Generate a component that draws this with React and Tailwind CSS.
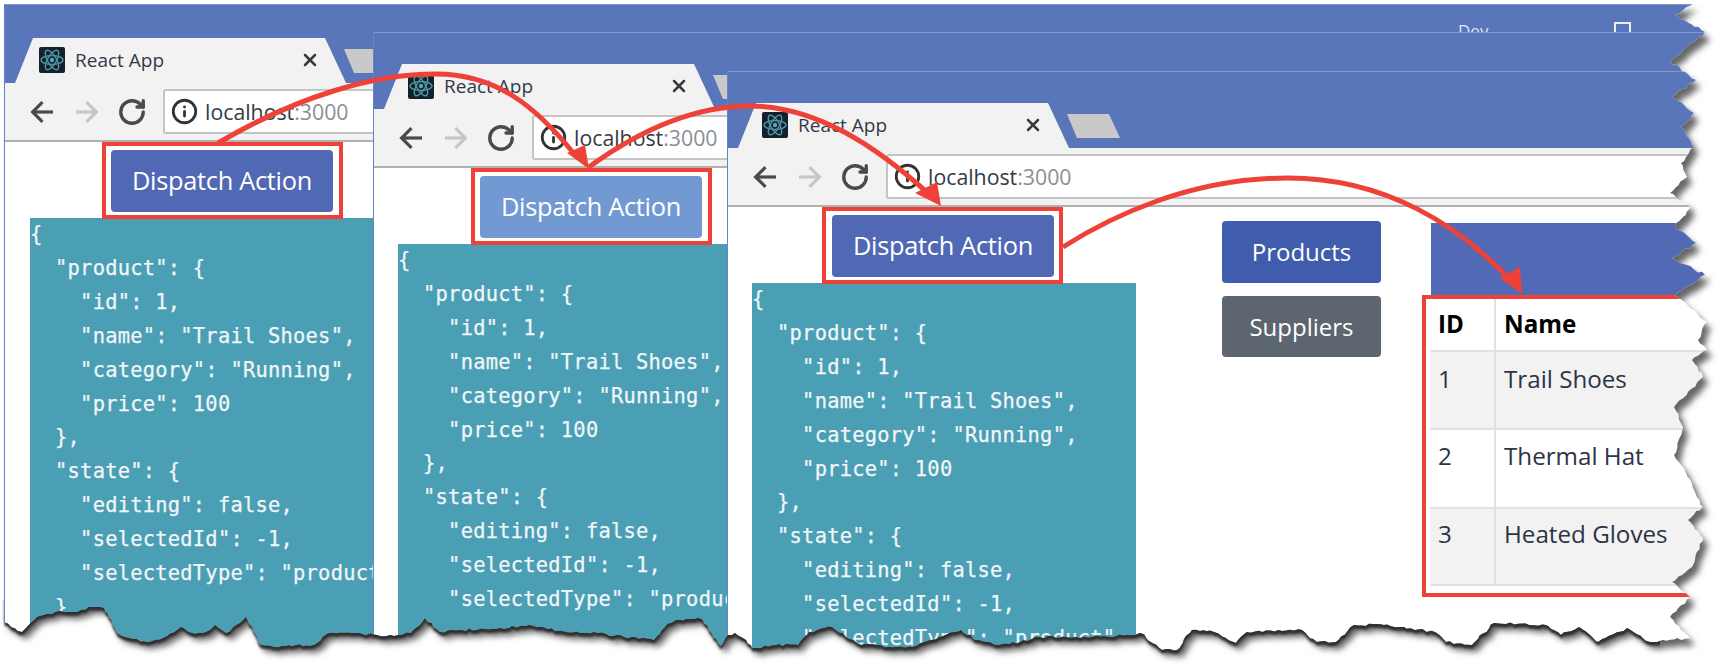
import React from "react";
import { RotateCw, X, Info } from "lucide-react";

const BOTTOM = [[4,622],[22,632],[37,617],[55,612],[74,612],[92,607],[104,608],[109,617],[117,633],[129,638],[148,642],[163,638],[181,627],[192,633],[203,633],[215,625],[226,633],[240,623],[246,617],[255,633],[261,645],[274,647],[296,645],[314,645],[329,633],[351,633],[377,635],[398,635],[411,633],[425,618],[440,632],[462,630],[492,629],[529,625],[548,629],[580,633],[598,633],[624,637],[654,640],[665,627],[676,620],[702,619],[709,630],[721,646],[728,635],[735,633],[746,640],[752,648],[776,645],[798,645],[809,632],[832,627],[846,637],[861,645],[913,647],[939,637],[961,630],[976,640],[998,645],[1020,642],[1035,637],[1076,637],[1135,635],[1140,633],[1162,650],[1177,650],[1192,630],[1214,632],[1236,643],[1247,632],[1302,630],[1317,642],[1336,642],[1354,625],[1384,625],[1435,632],[1446,642],[1472,645],[1494,623],[1546,625],[1561,635],[1579,627],[1590,635],[1598,642],[1627,628],[1650,642],[1690,638]];
const RIGHT = [[1670,617],[1690,597],[1672,582],[1692,567],[1703,538],[1688,520],[1703,507],[1686,473],[1674,455],[1683,427],[1674,407],[1703,377],[1692,360],[1707,350],[1698,340],[1707,322],[1675,295],[1705,275],[1672,258],[1696,243],[1675,227],[1690,208],[1687,203],[1670,193],[1687,177],[1681,163],[1694,147],[1681,127],[1694,113],[1672,97],[1696,80],[1685,72],[1670,62],[1705,32],[1675,15],[1693,4]];

function buildEdge() {
  let seed = 12345;
  const rnd = () => {
    seed = (seed * 1103515245 + 12345) % 2147483648;
    return seed / 2147483648 - 0.5;
  };
  const pts = [...BOTTOM, ...RIGHT];
  const out = [pts[0]];
  for (let i = 1; i < pts.length; i++) {
    const [ax, ay] = pts[i - 1];
    const [bx, by] = pts[i];
    const n = Math.max(1, Math.round(Math.hypot(bx - ax, by - ay) / 4));
    for (let k = 1; k <= n; k++) {
      const t = k / n;
      const j = k === n ? 0 : 1;
      out.push([
        +(ax + (bx - ax) * t + j * rnd() * 2).toFixed(1),
        +(ay + (by - ay) * t + j * rnd() * 2.6).toFixed(1),
      ]);
    }
  }
  return out;
}
const EDGE = buildEdge().map((p) => p.join(" ")).join(" L");
const PAGE_SHAPE = `M4 4 L${EDGE} Z`;
const OUTSIDE = `M0 0 H1719 V667 H0 Z ${PAGE_SHAPE}`;

function TornEdge() {
  return (
    <svg className="absolute left-0 top-0 pointer-events-none" width="1719" height="667" viewBox="0 0 1719 667">
      <defs>
        <clipPath id="outside">
          <path d={OUTSIDE} clipRule="evenodd" />
        </clipPath>
        <clipPath id="low">
          <rect x="0" y="600" width="1660" height="67" />
        </clipPath>
        <filter id="soft" x="-5%" y="-5%" width="110%" height="110%">
          <feGaussianBlur stdDeviation="3" />
        </filter>
        <filter id="tight" x="-5%" y="-5%" width="110%" height="110%">
          <feGaussianBlur stdDeviation="0.9" />
        </filter>
      </defs>
      <path d={OUTSIDE} fill="#ffffff" fillRule="evenodd" />
      <g clipPath="url(#outside)">
        <path d={PAGE_SHAPE} fill="#666666" transform="translate(5 7)" filter="url(#soft)" />
        <g clipPath="url(#low)">
          <path d={PAGE_SHAPE} fill="#2e2e2e" transform="translate(0.5 3.5)" filter="url(#tight)" />
        </g>
      </g>
    </svg>
  );
}

function Arrows() {
  const c = "#ee4238";
  return (
    <svg className="absolute left-0 top-0 pointer-events-none" width="1719" height="667" viewBox="0 0 1719 667">
      <g fill="none" stroke={c} strokeWidth="5">
        <path d="M218 143 C 300 95 375 74 436 74 C 495 74 535 105 575 155" />
        <path d="M589 167 C 640 130 695 106 750 106 C 815 106 875 145 930 195" />
        <path d="M1063 247 C 1110 217 1190 178 1288 178 C 1385 178 1460 225 1514 284" />
      </g>
      <g fill={c}>
        <polygon points="589,169 567,153 585,145" />
        <polygon points="941,206 915,193 937,182" />
        <polygon points="1522,294 1500,278 1520,267" />
      </g>
    </svg>
  );
}

function Favicon() {
  return (
    <svg width="26" height="26" viewBox="0 0 26 26" className="shrink-0">
      <rect width="26" height="26" rx="2" fill="#14202a" />
      <g fill="none" stroke="#4f96a6" strokeWidth="1.4">
        <ellipse cx="13" cy="13" rx="11" ry="4.4" />
        <ellipse cx="13" cy="13" rx="11" ry="4.4" transform="rotate(60 13 13)" />
        <ellipse cx="13" cy="13" rx="11" ry="4.4" transform="rotate(120 13 13)" />
      </g>
      <circle cx="13" cy="13" r="2.2" fill="#5aa6b6" />
    </svg>
  );
}

function NavArrow({ className, flip }) {
  return (
    <svg width="23" height="22" viewBox="0 0 23 22" className={`shrink-0 ${className}`}>
      <g fill="none" stroke="currentColor" strokeWidth="3.2" transform={flip ? "translate(23 0) scale(-1 1)" : undefined}>
        <path d="M23 11H3" />
        <path d="M12.5 1.2 L2.6 11 L12.5 20.8" />
      </g>
    </svg>
  );
}

function Tabs() {
  return (
    <div className="flex h-[45px] pl-[10px] shrink-0">
      <div className="flex items-center w-[331px] h-[45px] pl-[24px] pb-[1px] bg-[#f2f2f2] [clip-path:polygon(0_100%,18px_0,calc(100%-21px)_0,100%_100%)]">
        <Favicon />
        <span className="ml-[10px] text-[19px] leading-none text-[#333a45] font-['Open_Sans',sans-serif]">React App</span>
        <X className="ml-[136px] text-[#3a3a3a]" size={20} strokeWidth={3} />
      </div>
      <div className="w-[53px] h-[24px] mt-[11px] -ml-[2px] bg-[#c9c9c9] [clip-path:polygon(0_0,42px_0,100%_100%,10px_100%)]" />
    </div>
  );
}

function Toolbar() {
  return (
    <div className="flex items-center h-[59px] pl-[25px] bg-[#f2f2f2] border-b-2 border-[#b0b0b0] shrink-0">
      <NavArrow className="text-[#4a4a4a]" />
      <NavArrow className="ml-[23px] text-[#c6c6c6]" flip />
      <RotateCw className="ml-[18px] text-[#4a4a4a] shrink-0" size={30} strokeWidth={2.7} />
      <div className="flex items-center ml-[16px] h-[45px] flex-1 pl-[6px] bg-white border-2 border-r-0 border-[#c4c4c4] rounded-l-[3px] font-['Open_Sans',sans-serif] text-[21.3px]">
        <Info className="text-[#333] shrink-0" size={27} strokeWidth={2.5} />
        <span className="ml-[7px] text-[#333a45]">localhost</span>
        <span className="text-[#8a8f96]">:3000</span>
      </div>
    </div>
  );
}

const CODE = `{
  "product": {
    "id": 1,
    "name": "Trail Shoes",
    "category": "Running",
    "price": 100
  },
  "state": {
    "editing": false,
    "selectedId": -1,
    "selectedType": "product"
  }
}`;

function LeftColumn({ color, boxLeft, codeLeft, btnPad }) {
  return (
    <div className="flex flex-col items-start w-[410px] shrink-0 relative">
      <div
        className="w-[241px] h-[77px] border-4 border-[#ee4238] pt-[4px] bg-white relative z-10 shrink-0"
        style={{ marginLeft: boxLeft, paddingLeft: btnPad }}
      >
        <div
          className="flex items-center justify-center w-[222px] h-[62px] pb-[2px] rounded-[4px] text-white text-[25.4px] font-['Open_Sans',sans-serif] tracking-[-0.3px]"
          style={{ background: color }}
        >
          Dispatch Action
        </div>
      </div>
      <pre
        className="w-[384px] -mt-[1px] h-[440px] bg-[#4b9fb5] text-[#f2f6f8] text-[20.4px] leading-[33.9px] tracking-[0.25px] [-webkit-text-stroke:0.25px_#f2f6f8] font-['DejaVu_Sans_Mono',monospace] overflow-hidden shrink-0"
        style={{ marginLeft: codeLeft }}
      >
        {CODE}
      </pre>
    </div>
  );
}

function Window({ className, topPad, color, boxLeft, codeLeft, btnPad = 5, children }) {
  return (
    <div className={`absolute flex flex-col h-[680px] bg-white overflow-hidden border-l border-[#6585c8] ${className}`}>
      <div className="bg-[#5876b9] border-t border-[#7d99d0] shrink-0" style={{ height: topPad }} />
      <div className="bg-[#5876b9] shrink-0">
        <Tabs />
      </div>
      <Toolbar />
      <div className="flex flex-1 items-start">
        <LeftColumn color={color} boxLeft={boxLeft} codeLeft={codeLeft} btnPad={btnPad} />
        {children}
      </div>
    </div>
  );
}

function Rows() {
  const rows = [
    ["1", "Trail Shoes", "bg-[#f2f2f2]", "h-[78px]", "pt-[12px]"],
    ["2", "Thermal Hat", "bg-white", "h-[79px]", "pt-[11px]"],
    ["3", "Heated Gloves", "bg-[#f2f2f2]", "h-[77px]", "pt-[10px]"],
  ];
  return (
    <table className="w-[400px] table-fixed border-collapse text-[24.2px] leading-[30px] text-[#2d3444] font-['Open_Sans',sans-serif]">
      <colgroup>
        <col className="w-[65px]" />
        <col />
      </colgroup>
      <thead>
        <tr className="h-[52px] text-black">
          <th className="pl-[8px] pb-[2px] text-left font-bold border-r-2 border-b-2 border-[#dee2e6]">ID</th>
          <th className="pl-[8px] pb-[2px] text-left font-bold border-b-2 border-[#dee2e6]">Name</th>
        </tr>
      </thead>
      <tbody>
        {rows.map(([id, name, bg, h, pt]) => (
          <tr key={id} className={`${bg} ${h}`}>
            <td className={`pl-[8px] ${pt} align-top border-r-2 border-b-2 border-[#dee2e6]`}>{id}</td>
            <td className={`pl-[8px] ${pt} align-top border-b-2 border-[#dee2e6]`}>{name}</td>
          </tr>
        ))}
      </tbody>
    </table>
  );
}

export default function App() {
  return (
    <div className="relative w-[1719px] h-[667px] overflow-hidden bg-white">
      <Window className="left-[4px] top-[4px] w-[1715px]" topPad={34} color="#5168b5" boxLeft={97} codeLeft={25} />
      <div className="absolute left-[1458px] top-[21px] text-[17px] leading-[20px] text-[#dfe6f4] font-['Open_Sans',sans-serif]">Dev</div>
      <div className="absolute left-[1614px] top-[22px] w-[17px] h-[14px] border-2 border-[#e8edf6]" />
      <Window className="left-[373px] top-[32px] w-[1346px]" topPad={32} color="#7399d3" boxLeft={97} codeLeft={24} />
      <Window className="left-[727px] top-[71px] w-[992px]" topPad={32} color="#5168b5" boxLeft={94} codeLeft={24} btnPad={6}>
        <div className="flex flex-col gap-[13px] mt-[14px] ml-[84px] w-[159px] shrink-0 font-['Open_Sans',sans-serif] text-[24px] text-white">
          <div className="flex items-center justify-center h-[62px] rounded-[4px] bg-[#3f5cad]">Products</div>
          <div className="flex items-center justify-center h-[61px] rounded-[4px] bg-[#5c6570]">Suppliers</div>
        </div>
        <div className="flex flex-col mt-[16px] ml-[41px] w-[330px] shrink-0">
          <div className="h-[72px] ml-[9px] bg-[#5269b6]" />
          <div className="h-[302px] border-4 border-[#ee4238] pl-[4px] bg-white overflow-hidden">
            <Rows />
          </div>
        </div>
      </Window>
      <Arrows />
      <TornEdge />
    </div>
  );
}
